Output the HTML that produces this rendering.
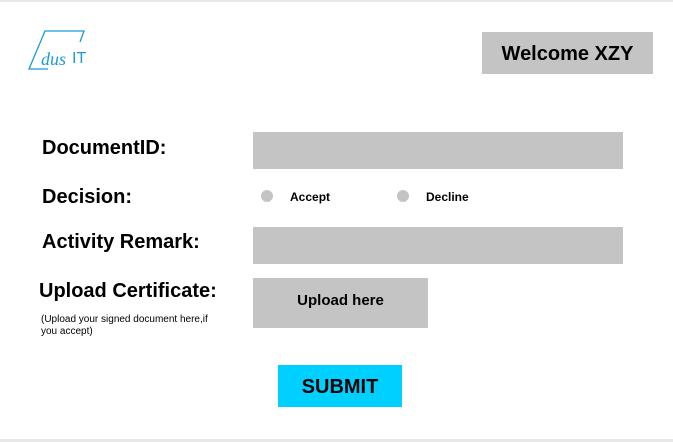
<!DOCTYPE html>
<html><head><meta charset="utf-8"><style>
body{margin:0;width:673px;height:442px;background:#fff;position:relative;overflow:hidden;font-family:"Liberation Sans",sans-serif;font-weight:bold;color:#000}
div,span{position:absolute}
.g{background:#c4c4c4}
.l{font-size:20px;white-space:nowrap}
</style></head><body>
<div style="left:0;top:0;width:673px;height:2px;background:#e8e8e8"></div>
<div style="left:0;top:439px;width:673px;height:3px;background:#e8e8e8"></div>
<svg style="position:absolute;left:26px;top:30px" width="66" height="44" viewBox="0 0 66 44">
<polyline points="54,12 58,1 19,1 3,39 22,39" fill="none" stroke="#1a9ad6" stroke-width="1.3"/>
<text x="15" y="35" font-family="Liberation Serif" font-style="italic" font-size="18" fill="#1a9ad6" font-weight="normal">dus</text>
<text x="46" y="33" font-family="Liberation Sans" font-size="16" fill="#1a9ad6" font-weight="normal">IT</text>
</svg>
<div class="g" style="left:482px;top:32px;width:171px;height:42px"></div>
<span class="l" style="left:482px;top:43px;width:171px;text-align:center">Welcome XZY</span>
<span class="l" style="left:42px;top:137px">DocumentID:</span>
<div class="g" style="left:253px;top:132px;width:370px;height:37px"></div>
<span class="l" style="left:42px;top:186px">Decision:</span>
<div style="left:261px;top:190px;width:12px;height:12px;border-radius:50%;background:#c4c4c4"></div>
<span style="left:290px;top:190px;font-size:12px">Accept</span>
<div style="left:397px;top:190px;width:12px;height:12px;border-radius:50%;background:#c4c4c4"></div>
<span style="left:426px;top:190px;font-size:12px">Decline</span>
<span class="l" style="left:42px;top:231px">Activity Remark:</span>
<div class="g" style="left:253px;top:227px;width:370px;height:37px"></div>
<span class="l" style="left:39px;top:280px">Upload Certificate:</span>
<span style="left:41px;top:314px;font-size:10px;font-weight:normal;line-height:12px;width:170px">(Upload your signed document here,if you accept)</span>
<div class="g" style="left:253px;top:278px;width:175px;height:50px"></div>
<span style="left:253px;top:292px;width:175px;text-align:center;font-size:15px">Upload here</span>
<div style="left:278px;top:365px;width:124px;height:42px;background:#00d0ff"></div>
<span class="l" style="left:278px;top:376px;width:124px;text-align:center">SUBMIT</span>
</body></html>
